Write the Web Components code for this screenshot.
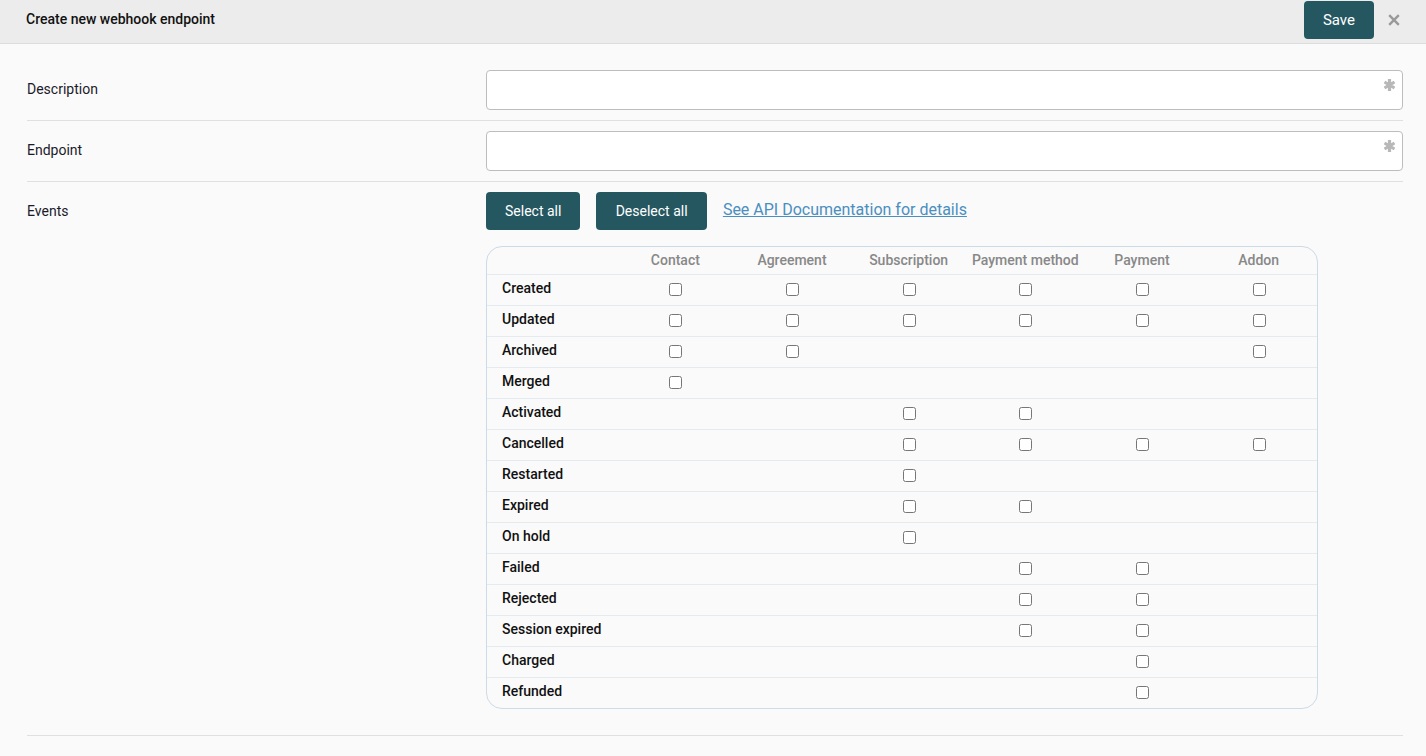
<!DOCTYPE html>
<html>
<head>
<meta charset="utf-8">
<title>Create new webhook endpoint</title>
<style>
html, body { margin: 0; padding: 0; background: #fafafa; }
body { font-family: Roboto, "Liberation Sans", sans-serif; font-size: 14px; color: #1a1a1a; }
</style>
</head>
<body>
<webhook-page></webhook-page>

<script>
class WhButton extends HTMLElement {
  constructor() {
    super();
    this.attachShadow({ mode: "open" }).innerHTML = `
      <style>
      :host { display: inline-block; }
      button {
        display: block;
        height: 38px;
        padding: 0 var(--btn-pad, 19px);
        background: #255761;
        color: #fff;
        border: 0;
        border-radius: 4px;
        font: var(--btn-size, 14px) Roboto, "Liberation Sans", sans-serif;
        cursor: pointer;
      }
      </style>
      <button><slot></slot></button>`;
  }
}
customElements.define("wh-button", WhButton);

class WhHeader extends HTMLElement {
  constructor() {
    super();
    this.attachShadow({ mode: "open" }).innerHTML = `
      <style>
      :host {
        display: flex;
        align-items: center;
        height: 43px;
        padding: 0 26px 0 26px;
        background: #ececec;
        border-bottom: 1px solid #dcdcdc;
      }
      .title { flex: 1; font-weight: 500; color: #111; position: relative; top: -3px; }
      wh-button { --btn-size: 15px; margin-top: -4px; margin-right: 14px; }
      svg { display: block; width: 12px; height: 12px; margin-top: -3px; }
      </style>
      <div class="title"><slot></slot></div>
      <wh-button>Save</wh-button>
      <svg viewBox="0 0 12 12"><path d="M1.2 1.2l9.6 9.6M10.8 1.2l-9.6 9.6" stroke="#999" stroke-width="2.4" fill="none"/></svg>`;
  }
}
customElements.define("wh-header", WhHeader);

class WhRow extends HTMLElement {
  constructor() {
    super();
    this.attachShadow({ mode: "open" }).innerHTML = `
      <style>
      :host {
        display: grid;
        grid-template-columns: 459px 917px;
        padding: 10px 0;
        border-bottom: 1px solid #e0e0e0;
      }
      .label { padding-top: 10px; line-height: 18px; color: #1a1a2a; }
      </style>
      <div class="label"><slot name="label"></slot></div>
      <div><slot></slot></div>`;
  }
}
customElements.define("wh-row", WhRow);

class WhInput extends HTMLElement {
  constructor() {
    super();
    this.attachShadow({ mode: "open" }).innerHTML = `
      <style>
      :host { display: block; position: relative; }
      input {
        display: block;
        box-sizing: border-box;
        width: 100%;
        height: 40px;
        padding: 0 30px 0 10px;
        background: #fff;
        border: 1px solid #bdbdbd;
        border-radius: 4px;
        font: 14px Roboto, "Liberation Sans", sans-serif;
      }
      svg { position: absolute; top: 9px; right: 8px; width: 11px; height: 12px; }
      </style>
      <input type="text">
      <svg viewBox="0 0 11 12"><path d="M5.5 0v12M.5 3l10 6M10.5 3l-10 6" stroke="#b8b8b8" stroke-width="3.2" fill="none"/></svg>`;
  }
}
customElements.define("wh-input", WhInput);

const COLUMNS = ["Contact", "Agreement", "Subscription", "Payment method", "Payment", "Addon"];
const EVENTS = [
  ["Created", [1, 1, 1, 1, 1, 1]],
  ["Updated", [1, 1, 1, 1, 1, 1]],
  ["Archived", [1, 1, 0, 0, 0, 1]],
  ["Merged", [1, 0, 0, 0, 0, 0]],
  ["Activated", [0, 0, 1, 1, 0, 0]],
  ["Cancelled", [0, 0, 1, 1, 1, 1]],
  ["Restarted", [0, 0, 1, 0, 0, 0]],
  ["Expired", [0, 0, 1, 1, 0, 0]],
  ["On hold", [0, 0, 1, 0, 0, 0]],
  ["Failed", [0, 0, 0, 1, 1, 0]],
  ["Rejected", [0, 0, 0, 1, 1, 0]],
  ["Session expired", [0, 0, 0, 1, 1, 0]],
  ["Charged", [0, 0, 0, 0, 1, 0]],
  ["Refunded", [0, 0, 0, 0, 1, 0]],
];

class WhEventsTable extends HTMLElement {
  constructor() {
    super();
    const head = COLUMNS.map(c => `<div class="th">${c}</div>`).join("");
    const rows = EVENTS.map(([name, cols]) => `
      <div class="name">${name}</div>
      ${cols.map(on => `<div class="cell">${on ? '<input type="checkbox">' : ""}</div>`).join("")}`).join("");
    this.attachShadow({ mode: "open" }).innerHTML = `
      <style>
      :host {
        display: block;
        box-sizing: border-box;
        width: 832px;
        margin-top: 16px;
        border: 1px solid #cbdbe7;
        border-radius: 16px;
        overflow: hidden;
      }
      .grid {
        display: grid;
        grid-template-columns: 130.5px repeat(6, 116.67px);
        grid-template-rows: 27px repeat(14, 31px);
      }
      .th {
        display: flex;
        align-items: center;
        justify-content: center;
        padding: 0 1px 1px 0;
        box-sizing: border-box;
        font-weight: 500;
        color: #888;
        white-space: nowrap;
      }
      .name, .cell { border-top: 1px solid #e4ebf0; box-sizing: border-box; }
      .name { padding: 4px 0 0 15px; line-height: 18px; font-weight: 500; color: #111; white-space: nowrap; }
      .cell { display: flex; align-items: center; justify-content: center; padding-bottom: 2px; }
      input { margin: 0; width: 13px; height: 13px; }
      </style>
      <div class="grid">
        <div></div>${head}
        ${rows}
      </div>`;
  }
}
customElements.define("wh-events-table", WhEventsTable);

class WebhookPage extends HTMLElement {
  constructor() {
    super();
    this.attachShadow({ mode: "open" }).innerHTML = `
      <style>
      :host { display: block; height: 756px; overflow: hidden; }
      .form { padding: 16px 23px 0 27px; }
      .actions { display: flex; align-items: center; gap: 16px; }
      a { color: #4a8fc0; font-size: 16px; text-decoration: underline; position: relative; top: -2px; }
      </style>
      <wh-header>Create new webhook endpoint</wh-header>
      <div class="form">
        <wh-row><span slot="label">Description</span><wh-input></wh-input></wh-row>
        <wh-row><span slot="label">Endpoint</span><wh-input></wh-input></wh-row>
        <wh-row style="padding-bottom:26px">
          <span slot="label">Events</span>
          <div class="actions">
            <wh-button>Select all</wh-button>
            <wh-button style="--btn-pad:19.3px">Deselect all</wh-button>
            <a href="#">See API Documentation for details</a>
          </div>
          <wh-events-table></wh-events-table>
        </wh-row>
      </div>`;
  }
}
customElements.define("webhook-page", WebhookPage);
</script>
</body>
</html>
